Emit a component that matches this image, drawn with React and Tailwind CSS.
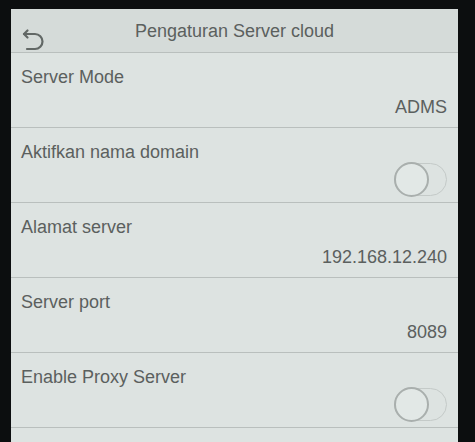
import React from 'react';

function BackIcon() {
  return (
    <svg width="26" height="24" viewBox="0 0 26 24" fill="none" stroke="#626866" strokeWidth="2.2" strokeLinecap="round" strokeLinejoin="round">
      <path d="M4 6 H15 a7.5 7.5 0 0 1 0 15 H7" />
      <path d="M7.5 2.5 L4 6 L7.5 9.5" />
    </svg>
  );
}

function Toggle() {
  return (
    <div className="relative w-[53px] h-[33px] rounded-full border border-[#c4cac8]">
      <div className="absolute left-[-1px] top-[-2px] w-[35px] h-[35px] rounded-full border-2 border-[#a9afad] bg-[#e2e8e6]" />
    </div>
  );
}

function Row({ label, value, toggle }) {
  return (
    <div className="h-[75px] flex flex-col justify-between pt-[13px] pb-[9px] pl-[10px] pr-[11px] border-b border-[#b9bfbd]">
      <div className="text-[18px] leading-[22px] text-[#5b605e]">{label}</div>
      {toggle ? (
        <div className="self-end mb-[8px]">
          <Toggle />
        </div>
      ) : (
        <div className="self-end text-[18px] leading-[22px] text-[#5b605e]">{value}</div>
      )}
    </div>
  );
}

export default function App() {
  return (
    <div className="w-[475px] h-[442px] overflow-hidden bg-[#0c0e0f] pt-[9px] pl-[11px] pr-[17px]" style={{ fontFamily: '"Liberation Sans", Arial, sans-serif' }}>
      <div className="h-full bg-[#dde3e1]">
        {/* header */}
        <div className="relative h-[44px] flex items-center justify-center bg-[#d5dbd9] border-b border-[#b9bfbd]">
          <div className="absolute left-[9px] top-[19px]">
            <BackIcon />
          </div>
          <div className="text-[18px] text-[#5b605e] pt-[2px]">Pengaturan Server cloud</div>
        </div>
        <Row label="Server Mode" value="ADMS" />
        <Row label="Aktifkan nama domain" toggle />
        <Row label="Alamat server" value="192.168.12.240" />
        <Row label="Server port" value="8089" />
        <Row label="Enable Proxy Server" toggle />
        <Row label="" value="" />
      </div>
    </div>
  );
}
